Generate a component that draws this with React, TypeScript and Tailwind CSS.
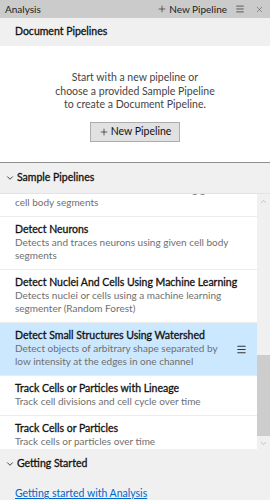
import { ChevronDown, ChevronUp, Menu, Plus, X } from "lucide-react";

type Pipeline = {
  title: string;
  desc: string[];
  selected?: boolean;
};

const pipelines: Pipeline[] = [
  {
    title: "Detect Neurites",
    desc: ["Detects and traces neurites without using given", "cell body segments"],
  },
  {
    title: "Detect Neurons",
    desc: ["Detects and traces neurons using given cell body", "segments"],
  },
  {
    title: "Detect Nuclei And Cells Using Machine Learning",
    desc: ["Detects nuclei or cells using a machine learning", "segmenter (Random Forest)"],
  },
  {
    title: "Detect Small Structures Using Watershed",
    desc: ["Detect objects of arbitrary shape separated by", "low intensity at the edges in one channel"],
    selected: true,
  },
  {
    title: "Track Cells or Particles with Lineage",
    desc: ["Track cell divisions and cell cycle over time"],
  },
  {
    title: "Track Cells or Particles",
    desc: ["Track cells or particles over time"],
  },
];

// semibold look: Lato has no semibold installed, so thicken the regular cut a little
const semi = "[-webkit-text-stroke:0.3px_currentColor]";

function SectionHeader({ label }: { label: string }) {
  return (
    <div className="flex items-center h-[30px] bg-[#f0f0f0] pl-[5px] shrink-0">
      <ChevronDown size={10} strokeWidth={2} className="text-[#222] mr-[2px]" />
      <span className={`text-[10.5px] text-[#111] ${semi}`}>{label}</span>
    </div>
  );
}

function PipelineRow({ p }: { p: Pipeline }) {
  return (
    <div
      className={`relative border-b border-[#ececec] pl-[15px] pr-[20px] pt-[6px] pb-[7px] leading-[13px] ${
        p.selected ? "bg-[#cce8ff]" : "bg-white"
      }`}
    >
      <div className={`text-[10.5px] text-[#111] whitespace-nowrap ${semi}`}>{p.title}</div>
      {p.desc.map((d) => (
        <div key={d} className="text-[10px] text-[#6f6f6f] whitespace-nowrap">
          {d}
        </div>
      ))}
      {p.selected && (
        <Menu size={11} strokeWidth={2.5} className="absolute right-[10px] top-[21px] text-[#333]" />
      )}
    </div>
  );
}

export default function App() {
  return (
    <div className="w-[270px] h-[500px] overflow-hidden flex flex-col bg-[#f0f0f0] [font-family:Lato,sans-serif]">
      {/* title bar */}
      <div className="flex items-center h-[18px] bg-[#cbcbcb] pl-[5px] pr-[6px] shrink-0 text-[10px] text-[#222]">
        <span>Analysis</span>
        <span className="ml-auto flex items-center">
          <Plus size={10} strokeWidth={1.5} className="mr-[2px]" />
          New Pipeline
        </span>
        <Menu size={10} strokeWidth={2} className="ml-[8px] text-[#444]" />
        <X size={9} strokeWidth={1.5} className="ml-[10px] text-[#555]" />
      </div>

      {/* document pipelines */}
      <div className="flex items-center h-[28px] bg-[#f0f0f0] pl-[15px] shrink-0">
        <span className={`text-[10.5px] text-[#111] ${semi}`}>Document Pipelines</span>
      </div>
      <div className="h-[116px] bg-white flex flex-col items-center shrink-0 pt-[25px]">
        <p className="text-center text-[10.5px] leading-[13.5px] text-[#444]">
          Start with a new pipeline or
          <br />
          choose a provided Sample Pipeline
          <br />
          to create a Document Pipeline.
        </p>
        <button className="mt-[10px] w-[90px] h-[20px] bg-[#e1e1e1] border border-[#adadad] flex items-center justify-center text-[10.5px] text-[#111]">
          <Plus size={10} strokeWidth={1.5} className="mr-[2px]" />
          New Pipeline
        </button>
      </div>
      <div className="h-px bg-[#8f8f8f] shrink-0" />

      {/* sample pipelines */}
      <SectionHeader label="Sample Pipelines" />
      <div className="flex h-[256px] shrink-0 border-t border-[#e3e3e3]">
        <div className="flex-1 overflow-hidden bg-white">
          <div className="mt-[-30px]">
            {pipelines.map((p) => (
              <PipelineRow key={p.title} p={p} />
            ))}
          </div>
        </div>
        <div className="w-[13px] bg-[#f0f0f0] flex flex-col items-center">
          <ChevronUp size={9} strokeWidth={1.5} className="text-[#a0a0a0] mt-[3px]" />
          <div className="mt-[149px] w-full h-[81px] bg-[#cdcdcd]" />
          <ChevronDown size={9} strokeWidth={1.5} className="text-[#a0a0a0] mt-[3px]" />
        </div>
      </div>

      {/* getting started */}
      <SectionHeader label="Getting Started" />
      <div className="pl-[15px]">
        <a href="#" className="text-[10.5px] text-[#0066cc] underline">
          Getting started with Analysis
        </a>
      </div>
    </div>
  );
}
